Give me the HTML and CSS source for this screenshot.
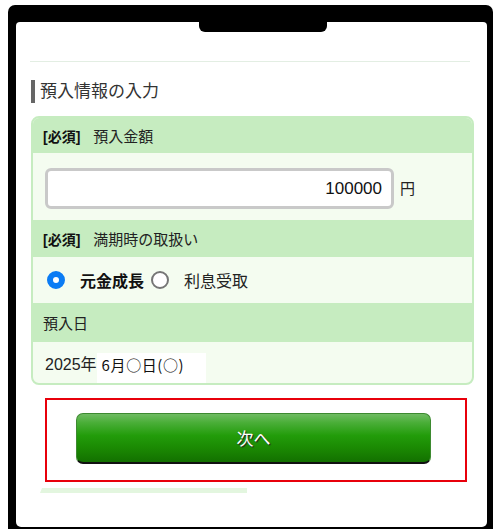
FILE: index.html
```html
<!DOCTYPE html>
<html lang="ja">
<head>
<meta charset="utf-8">
<link rel="stylesheet" href="styles.css">
</head>
<body>
<div class="phone">
  <div class="notch"></div>
  <div class="screen">
    <div class="divider"></div>
    <div class="content">
      <h2 class="heading">預入情報の入力</h2>
      <div class="card">
        <div class="row-head h1"><b class="req">[必須]</b><span>預入金額</span></div>
        <div class="row-body amount">
          <div class="input">100000</div>
          <span class="unit">円</span>
        </div>
        <div class="row-head h2"><b class="req">[必須]</b><span>満期時の取扱い</span></div>
        <div class="row-body radios">
          <span class="radio checked"></span>
          <b class="opt-on">元金成長</b>
          <span class="radio"></span>
          <span class="opt">利息受取</span>
        </div>
        <div class="row-head h3"><span>預入日</span></div>
        <div class="row-body date">
          <span>2025年</span><span class="patch">6月○日(○)</span>
        </div>
      </div>
      <div class="focus">
        <div class="btn">次へ</div>
      </div>
      <div class="tab"></div>
    </div>
  </div>
</div>
</body>
</html>
```
FILE: styles.css
```css
html, body {
  margin: 0;
  padding: 0;
  background: #fff;
}
body {
  font-family: "Liberation Sans", "Noto Sans CJK JP", sans-serif;
  color: #222;
}
.phone {
  position: relative;
  box-sizing: border-box;
  margin: 5px 7px 0 8px;
  height: 524px;
  background: #000;
  border-radius: 7px 7px 0 0;
  padding: 17px 6px 2px 8px;
}
.notch {
  position: absolute;
  left: 191px;
  top: 17px;
  width: 128px;
  height: 10px;
  background: #000;
  border-radius: 0 0 6px 6px;
}
.screen {
  height: 100%;
  background: #fff;
  border-radius: 4px 4px 5px 5px;
  overflow: hidden;
  padding-top: 39px;
  box-sizing: border-box;
}
.divider {
  height: 1px;
  margin: 0 17px 0 14px;
  background: #e3eee3;
}
.content {
  padding: 0 13px 0 15px;
}
.heading {
  margin: 18px 0 0 0;
  height: 23px;
  line-height: 23px;
  border-left: 4px solid #666;
  padding-left: 5px;
  font-size: 17px;
  font-weight: normal;
  color: #333;
}
.card {
  margin-top: 13px;
  border: 2px solid #c6ecc0;
  border-radius: 8px;
  overflow: hidden;
  background: #f4fcf0;
}
.row-head {
  background: #c6ecc0;
  display: flex;
  align-items: center;
  padding: 0 10px;
  font-size: 15px;
  color: #222;
}
.row-head .req {
  font-size: 14px;
  margin-right: 13px;
  color: #111;
}
.h1 { height: 35px; }
.h2 { height: 37px; }
.h3 { height: 39px; }
.row-body {
  display: flex;
  align-items: center;
}
.amount {
  height: 67px;
  padding: 0 0 0 12px;
  box-sizing: border-box;
  align-items: flex-start;
  padding-top: 15px;
}
.input {
  box-sizing: border-box;
  width: 349px;
  height: 41px;
  border: 3px solid #c9c9c9;
  border-radius: 6px;
  background: #fff;
  text-align: right;
  padding-right: 9px;
  font-size: 17px;
  line-height: 35px;
  color: #111;
}
.unit {
  margin-left: 6px;
  font-size: 15px;
  line-height: 41px;
}
.radios {
  height: 46px;
  padding-left: 14px;
  font-size: 16px;
}
.radio {
  box-sizing: border-box;
  width: 18px;
  height: 18px;
  border-radius: 50%;
  border: 2px solid #767676;
  background: #fff;
  flex: none;
}
.radio.checked {
  border: 6px solid #0b7cf4;
  background: #fff;
}
.opt-on {
  margin: 0 7px 0 15px;
  font-size: 16px;
  color: #111;
}
.opt {
  margin-left: 15px;
  color: #222;
}
.date {
  height: 41px;
  padding: 13px 0 0 12px;
  box-sizing: border-box;
  align-items: flex-start;
  font-size: 16px;
  line-height: 20px;
}
.patch {
  background: #fff;
  margin-top: -2px;
  padding: 2px 22px 11px 5px;
  font-family: "Noto Sans CJK JP", sans-serif;
  font-size: 15px;
  letter-spacing: 0.6px;
  color: #111;
}
.focus {
  margin: 13px 7px 0 14px;
  border: 2px solid #e8000b;
  padding: 13px 34px 16px 29px;
}
.btn {
  height: 51px;
  box-sizing: border-box;
  border-radius: 7px;
  border: 1px solid #3d8a30;
  border-bottom: 2px solid #111;
  background: linear-gradient(#6fbb62 0%, #4aae38 18%, #229c0a 45%, #1b8a03 70%, #137000 100%);
  color: #fff;
  font-size: 17px;
  text-align: center;
  line-height: 48px;
  padding-top: 2px;
  text-shadow: 1px 1px 1px #222;
}
.tab {
  margin: 6px 0 0 9px;
  width: 207px;
  height: 5px;
  background: #e3f6df;
  clip-path: polygon(2px 0, 100% 0, 100% 100%, 0 100%);
}
```
